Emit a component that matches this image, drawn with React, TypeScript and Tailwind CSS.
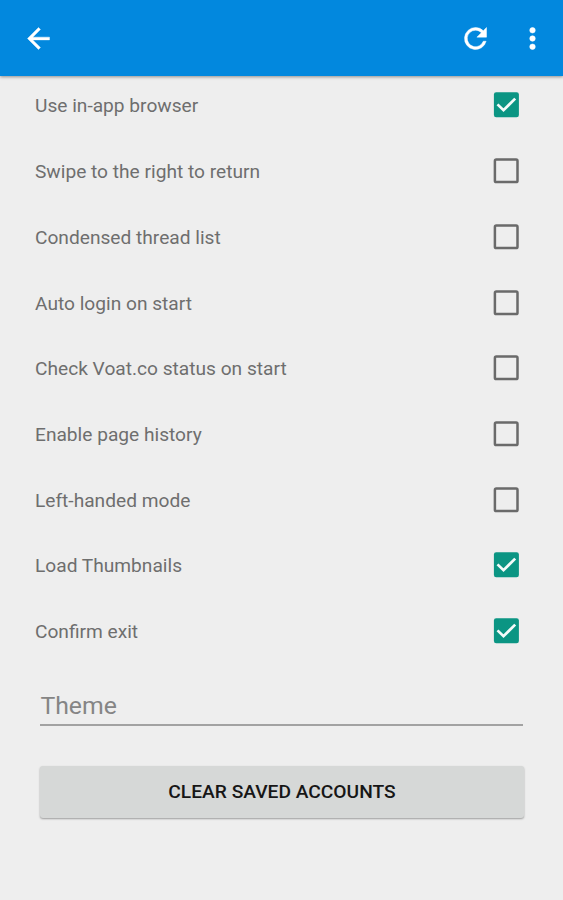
import React from "react";

const settings: { label: string; on: boolean }[] = [
  { label: "Use in-app browser", on: true },
  { label: "Swipe to the right to return", on: false },
  { label: "Condensed thread list", on: false },
  { label: "Auto login on start", on: false },
  { label: "Check Voat.co status on start", on: false },
  { label: "Enable page history", on: false },
  { label: "Left-handed mode", on: false },
  { label: "Load Thumbnails", on: true },
  { label: "Confirm exit", on: true },
];

function Box({ on }: { on: boolean }) {
  return (
    <svg viewBox="0 0 26 26" className="h-[26px] w-[26px] shrink-0" fill="none">
      {on ? (
        <>
          <rect x="0.9" y="0.3" width="25" height="25" rx="2.3" fill="#0b9583" />
          <path d="M4.5 12.4 L10.5 18.2 L22.2 6.6" stroke="#f4fbfa" strokeWidth="2.7" />
        </>
      ) : (
        <rect x="1.9" y="1.5" width="22.6" height="22.6" rx="1.4" stroke="#6a6a6a" strokeWidth="2.5" />
      )}
    </svg>
  );
}

export default function App() {
  return (
    <div className="flex h-[900px] w-full flex-col bg-[#eeeeee] font-['Roboto',sans-serif]">
      <header className="flex h-[76px] shrink-0 items-center bg-[#0288de] pl-[22px] pr-[14px] shadow-[0_1px_3px_rgba(0,0,0,0.4)]">
        <svg viewBox="0 0 24 24" className="h-[33px] w-[33px]" fill="#fff" stroke="#fff" strokeWidth="0.3">
          <path d="M20 11H7.83l5.59-5.59L12 4l-8 8 8 8 1.41-1.41L7.83 13H20v-2z" />
        </svg>
        <div className="flex-1" />
        <svg viewBox="0 0 24 24" className="mr-[24px] h-[33px] w-[33px]" fill="#fff" stroke="#fff" strokeWidth="0.35">
          <path d="M17.65 6.35A7.96 7.96 0 0 0 12 4a8 8 0 1 0 7.73 10h-2.08A6 6 0 1 1 12 6c1.66 0 3.14.69 4.22 1.78L13 11h7V4l-2.35 2.35z" />
        </svg>
        <svg viewBox="0 0 24 24" className="h-[33px] w-[33px]" fill="#fff" stroke="#fff" strokeWidth="0.4">
          <path d="M12 8a2 2 0 1 0 0-4 2 2 0 0 0 0 4zm0 2a2 2 0 1 0 0 4 2 2 0 0 0 0-4zm0 6a2 2 0 1 0 0 4 2 2 0 0 0 0-4z" />
        </svg>
      </header>
      <main className="-mt-[3.4px] flex flex-col">
        {settings.map((s) => (
          <label key={s.label} className="flex h-[65.7px] items-center justify-between pl-[35px] pr-[44px]">
            <span className="whitespace-nowrap pt-[2px] text-[19.15px] leading-[24px] text-[#6e6e6e]">{s.label}</span>
            <Box on={s.on} />
          </label>
        ))}
        <div className="ml-[40.4px] mr-[40px] mt-[24px] flex h-[38px] items-center border-b-2 border-[#a2a2a2] text-[24.8px] text-[#858585]">
          Theme
        </div>
        <button className="mx-[40px] mt-[40.4px] h-[52px] w-[484px] rounded-[3px] bg-[#d6d8d7] text-[19.2px] font-medium text-[#161616] shadow-[0_1px_2px_rgba(0,0,0,0.35)]">
          CLEAR SAVED ACCOUNTS
        </button>
      </main>
    </div>
  );
}
